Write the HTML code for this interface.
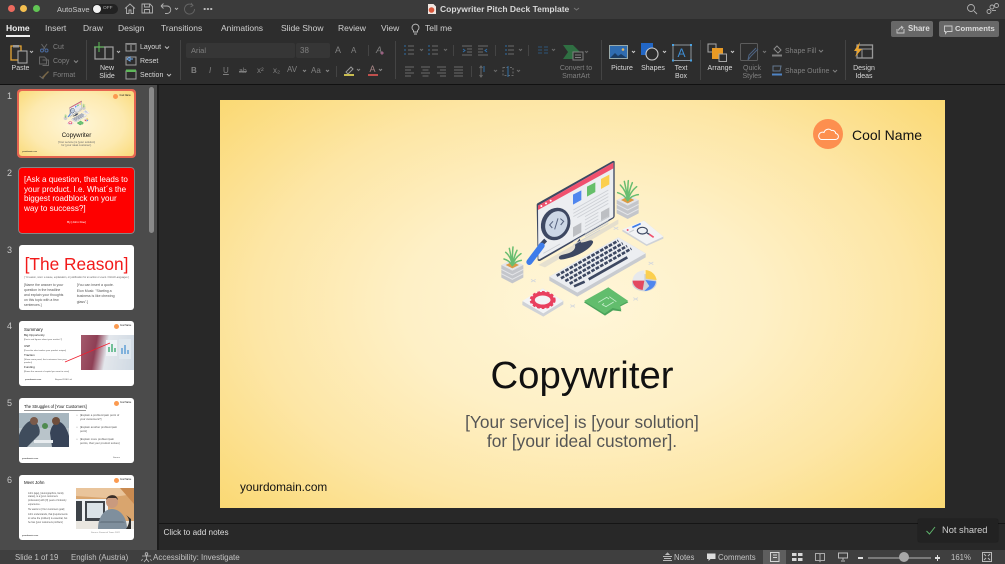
<!DOCTYPE html>
<html><head><meta charset="utf-8"><style>
html,body{margin:0;padding:0;background:#282828}
#r{position:relative;width:1005px;height:564px;overflow:hidden;background:#282828;font-family:"Liberation Sans",sans-serif;color:#d8d8d8}
.a{position:absolute}
.t{position:absolute;white-space:nowrap;line-height:1}
.c{text-align:center;transform:translateX(-50%)}
svg{position:absolute;overflow:visible}
.th{position:absolute;left:19px;width:115px;height:65px;background:#fff;border-radius:3px;overflow:hidden}
.n{position:absolute;left:7px;font-size:9px;color:#c8c8c8;line-height:1}
.tab{position:absolute;top:24px;font-size:8.5px;color:#d0d0d0;white-space:nowrap;line-height:1}
.rl{position:absolute;font-size:7px;color:#d8d8d8;white-space:nowrap;line-height:7.5px;text-align:center;transform:translateX(-50%)}
.dim{color:#808080}
.sep{position:absolute;width:1px;background:#444}
.st{position:absolute;top:554px;font-size:7.8px;color:#c4c4c4;white-space:nowrap;line-height:1}
.mini{position:absolute;color:#555;white-space:nowrap;line-height:1.25}
</style></head><body><div id="r">

<svg width="0" height="0" style="left:0;top:0"><defs><symbol id="ill" viewBox="0 0 570 525">
<!-- monitor shadow -->
<path d="M145 345 385 208v14L165 352Z" fill="#cfcfcf" opacity=".55"/>
<!-- stand -->
<path d="M255 285c3 10-5 22-28 27-14 3-22 6-20 13 2 5 10 4 22 1 35-8 72-28 80-48 2-7-6-9-12-6-6 2-14 5-24 6l-4-12Z" fill="#3d4862"/>
<!-- monitor -->
<path d="M140 165c0-3 2-5 4-6L368 33c3-1 6 0 6 3v162c0 3-2 6-5 8L152 332c-5 2-9 1-9-3Z" fill="#3d4862"/>
<path d="M144 167 370 38v160c0 3-1 4-3 5L150 327c-3 2-5 1-5-2Z" fill="#eceef1"/>
<path d="M144 167 370 38v17L144 180Z" fill="#f0516e"/>
<circle cx="154" cy="168" r="3" fill="#fff"/><circle cx="168" cy="160" r="3" fill="#fff"/><circle cx="182" cy="152" r="3" fill="#fff"/>
<path d="M249 134 274 121v29L249 164Z" fill="#4f86ee"/>
<path d="M291 110 316 97v29L291 140Z" fill="#66bf6a"/>
<path d="M333 87 358 74v29L333 117Z" fill="#fbcf4f"/>
<path d="M333 186 358 172v29L333 215Z" fill="#bdbfc3"/>
<path d="M249 232 274 218v29L249 261Z" fill="#bdbfc3"/>
<g stroke="#cdd0d5" stroke-width="2.500" fill="none"><path d="M250 180 355 120M250 190 355 130M250 200 355 140M262 203 355 150M285 200 355 160M285 210 325 187M285 220 325 197M285 230 325 207M285 240 355 200M285 250 355 210M285 260 355 220M250 275 355 215M250 285 330 240M160 310 210 282"/></g>
<!-- magnifier -->
<ellipse cx="197" cy="222" rx="43" ry="50" fill="#3d4862" transform="rotate(25 197 222)"/>
<ellipse cx="199" cy="222" rx="32" ry="40" fill="#ccd7e6" transform="rotate(25 199 222)"/>
<path d="M189 214l-10 11 8 9M211 206l10 8-9 11M204 205l-10 33" stroke="#55617d" fill="none" stroke-width="3"/>
<path d="M167 270 150 288" stroke="#3d4862" stroke-width="12"/>
<path d="M155 287 118 336" stroke="#3e7cea" stroke-width="18" stroke-linecap="round"/>
<!-- keyboard -->
<path d="M178 380 385 262 467 310v12L262 440 178 392Z" fill="#c8cbd0"/>
<path d="M178 380 385 262 467 310 262 428Z" fill="#eceef1"/>
<g stroke="#3d4862" stroke-width="8" stroke-dasharray="11 4" fill="none"><path d="M200 377 385 272"/><path d="M213 385 398 280"/><path d="M226 393 411 288"/><path d="M239 401 424 296"/></g>
<path d="M296 388 412 322" stroke="#3d4862" stroke-width="8"/>
<path d="M252 409 284 395" stroke="#3d4862" stroke-width="8"/>
<!-- right plant -->
<g transform="translate(413,150)"><path d="M-33 0v40L0 57 33 40V0Z" fill="#c4c6cb"/><path d="M-33 13 0 30 33 13M-33 27 0 44 33 27" stroke="#e4e5e8" stroke-width="3" fill="none"/><path d="M-33 0 0-17 33 0 0 17Z" fill="#e4e5e8"/><path d="M-20 0 0-10 20 0 0 10Z" fill="#dc9a45"/>
<g stroke="#68bd70" stroke-width="4.500" fill="none" stroke-linecap="round"><path d="M0 2C-3-20-12-35-22-45M0 2C-2-20-6-40-10-56M0 2C0-20 0-40 2-58M0 2C3-20 8-38 14-52M0 2C5-15 14-30 27-40M0 2C-8-12-16-18-30-22M0 2C8-8 16-14 32-16"/></g></g>
<!-- left plant -->
<g transform="translate(67,345)"><path d="M-33 0v38L0 55 33 38V0Z" fill="#c4c6cb"/><path d="M-33 13 0 30 33 13M-33 26 0 43 33 26" stroke="#e4e5e8" stroke-width="3" fill="none"/><path d="M-33 0 0-17 33 0 0 17Z" fill="#e4e5e8"/><path d="M-20 0 0-10 20 0 0 10Z" fill="#dc9a45"/>
<g stroke="#68bd70" stroke-width="4.500" fill="none" stroke-linecap="round"><path d="M0 2C-3-18-10-30-20-38M0 2C-2-18-6-36-9-50M0 2C0-18 0-36 2-54M0 2C3-18 8-32 14-44M0 2C5-15 14-26 26-34M0 2C-8-10-14-15-25-18M0 2C8-8 14-12 27-14"/></g></g>
<!-- magnify card -->
<path d="M397 240 462 212 520 260v6L470 288 397 244Z" fill="#cfd2d7"/>
<path d="M397 238 462 212 520 260 470 283Z" fill="#f2f3f5"/>
<path d="M427 232 452 221" stroke="#3e7cea" stroke-width="5"/>
<circle cx="413" cy="240" r="3" fill="#f0516e"/>
<path d="M418 247 432 240" stroke="#c9ccd1" stroke-width="3"/>
<ellipse cx="457" cy="242" rx="15" ry="10" fill="#eef1f5" stroke="#3d4862" stroke-width="3.500"/>
<path d="M471 249 480 254" stroke="#3d4862" stroke-width="4"/>
<path d="M478 253 491 262" stroke="#f0516e" stroke-width="5"/>
<!-- pie -->
<ellipse cx="463" cy="398" rx="37" ry="26" fill="#cfd2d7"/>
<path d="M463 392 428 392C428 375 442 362 463 361Z" fill="#e7e9ec"/>
<path d="M467 386V360C485 362 497 374 500 390Z" fill="#fbcf4f"/>
<path d="M463 392H428C428 405 440 418 458 420Z" fill="#e3485f"/>
<path d="M466 390 498 394C496 410 482 422 463 423L478 408Z" fill="#4f86ee"/>
<!-- gear card -->
<path d="M97 455 158 415 220 453v10L160 500 97 465Z" fill="#cfd2d7"/>
<path d="M97 453 158 415 220 453 160 490Z" fill="#f3f4f6"/>
<ellipse cx="158" cy="450" rx="29" ry="19" fill="none" stroke="#e9405f" stroke-width="11"/>
<ellipse cx="158" cy="450" rx="36" ry="24" fill="none" stroke="#e9405f" stroke-width="6" stroke-dasharray="8 6"/>
<!-- green card -->
<path d="M282 457 355 412 415 457l-25 13 4 14-25-3-24 16Z" fill="#4aa35a"/>
<path d="M282 453 355 412 415 453 390 466l4 14-26-6-24 17Z" fill="#62bd6d"/>
<path d="M325 457 350 442 357 447M342 460 337 464 348 470 371 456M358 440 379 455" stroke="#c5ecc9" fill="none" stroke-width="2.500"/>
<!-- crosses -->
<g stroke="#d4d8dd" stroke-width="2.500"><path d="M371 231l14 8M371 239l14-8M476 336l14 8M476 344l14-8M123 388l14 8M123 396l14-8M241 464l14 8M241 472l14-8M430 443l14 8M430 451l14-8"/></g>
</symbol></defs></svg>

<!-- title bar -->
<div class="a" style="left:0;top:0;width:1005px;height:19px;background:#3b3b3b"></div>
<div class="a" style="left:0;top:19px;width:1005px;height:65px;background:#2d2d2d"></div>
<div class="a" style="left:8px;top:5px;width:7px;height:7px;border-radius:50%;background:#ec6a5e"></div>
<div class="a" style="left:20px;top:5px;width:7px;height:7px;border-radius:50%;background:#f4bf4f"></div>
<div class="a" style="left:33px;top:5px;width:7px;height:7px;border-radius:50%;background:#61c554"></div>
<span class="t" style="left:57px;top:5.500px;font-size:7.500px;color:#c8c8c8">AutoSave</span>
<div class="a" style="left:92px;top:4px;width:26px;height:10px;border-radius:5px;background:#222"></div>
<div class="a" style="left:93px;top:5px;width:8px;height:8px;border-radius:50%;background:#f2f2f2"></div>
<span class="t" style="left:103px;top:7px;font-size:4.800px;color:#aaa">OFF</span>
<svg style="left:0;top:0" width="1005" height="19" fill="none" stroke="#b0b0b0" stroke-width=".9">
<path d="M125 8.500 130 4l5 4.500M126.500 7.500V13.500h2.500v-3.500h2v3.500h2.500V7.500"/>
<path d="M142 4h8L152.500 6.500V13H142ZM144.500 4v3h5V4M144.500 13v-3.500h5V13"/>
<path d="M161 6h6a3.500 3.500 0 0 1 0 7.500h-2M161 6l2.500-2.500M161 6l2.500 2.500"/>
<path d="M175 8l1.500 1.500L178 8"/>
<path d="M193 5.500a5 5 0 1 0 1.500 3.500M191 3l2 2.500-2.500 1.500" stroke="#666"/>
<path d="M967.500 3.500" /><circle cx="971" cy="8" r="3.500"/><path d="M974 11l3 3"/>
<circle cx="989" cy="11.500" r="2"/><circle cx="992" cy="7" r="2"/><circle cx="996.500" cy="5.500" r="2"/><path d="M992 10.500h4"/>
</svg>
<div class="a" style="left:203px;top:8px;width:10px;height:2px;background:radial-gradient(circle,#bbb 1px,transparent 1px) 0 0/3.300px 2px"></div>
<svg style="left:427px;top:3px" width="10" height="12"><path d="M1 1h5.500L9 3.500V11H1Z" fill="#f0e6e0"/><circle cx="4.500" cy="7" r="2.800" fill="#d9563a"/></svg>
<span class="t" style="left:440px;top:5px;font-size:8.500px;font-weight:bold;color:#d8d8d8">Copywriter Pitch Deck Template</span>
<svg style="left:573px;top:7px" width="8" height="5" fill="none" stroke="#777"><path d="M1 1l2.500 2L6 1"/></svg>

<!-- tabs -->
<span class="tab" style="left:6px;color:#eee;font-weight:bold">Home</span>
<div class="a" style="left:6px;top:35px;width:24px;height:1.500px;background:#eee"></div>
<span class="tab" style="left:45px">Insert</span>
<span class="tab" style="left:83px">Draw</span>
<span class="tab" style="left:118px">Design</span>
<span class="tab" style="left:161px">Transitions</span>
<span class="tab" style="left:221px">Animations</span>
<span class="tab" style="left:281px">Slide Show</span>
<span class="tab" style="left:338px">Review</span>
<span class="tab" style="left:381px">View</span>
<svg style="left:411px;top:23px" width="9" height="12" fill="none" stroke="#bbb" stroke-width=".9"><path d="M2.500 7.500a3.500 3.500 0 1 1 4 0V9h-4ZM3 11h3"/></svg>
<span class="tab" style="left:425px">Tell me</span>

<div class="a" style="left:891px;top:21px;width:42px;height:16px;border-radius:2px;background:#686868"></div>
<svg style="left:896px;top:25px" width="9" height="9" fill="none" stroke="#ccc" stroke-width=".9"><path d="M1 4v4h7V4M2.500 5.500C3 3.500 4.500 2.500 6 2.500M5 1l2 1.500-1.500 2"/></svg>
<span class="t" style="left:908px;top:25px;font-size:7.800px;font-weight:bold;color:#dcdcdc">Share</span>
<div class="a" style="left:939px;top:21px;width:60px;height:16px;border-radius:2px;background:#686868"></div>
<svg style="left:944px;top:25px" width="9" height="9" fill="none" stroke="#ccc" stroke-width=".9"><path d="M.5 1h7.500v5.500H3L1.500 8.500V6.500h-1Z"/></svg>
<span class="t" style="left:955px;top:25px;font-size:7.700px;font-weight:bold;color:#dcdcdc">Comments</span>

<!-- all ribbon icons: page coordinates -->
<svg style="left:0;top:0" width="1005" height="84" fill="none" stroke-width="1">
<!-- paste -->
<path d="M11 46h10v14H11Z" stroke="#e8a735" stroke-width="1.300"/><path d="M13 45h6v2.500h-6Z" fill="#999"/>
<path d="M18 51h9v12h-9Z" fill="#2d2d2d" stroke="#b0b0b0"/>
<path d="M30 51l1.500 1.500L33 51" stroke="#bbb"/>
<!-- cut copy format -->
<path d="M41.500 44l3.500 5M47 44l-3.500 5" stroke="#666"/><circle cx="42" cy="50.500" r="1.500" stroke="#4a6a9e"/><circle cx="46.500" cy="50.500" r="1.500" stroke="#4a6a9e"/>
<path d="M39.500 57h5l2 2v5h-7ZM42.500 60h6v5.500h-6" stroke="#666"/>
<path d="M41 78l4-4 3-3 1 1-3 3-3 4Z" fill="#7a6848"/><path d="M39.500 76l4 3" stroke="#666"/>
<!-- new slide -->
<path d="M95 47h18v12H95ZM105 47v12" stroke="#a0a0a0" stroke-width="1.200"/>
<path d="M99 42v10M94 47h10" stroke="#5cbf55"/>
<path d="M117 51l1.500 1.500L120 51" stroke="#bbb"/>
<!-- layout reset section -->
<path d="M126 43.500h10v7.500h-10ZM131 45v6" stroke="#a0a0a0"/><path d="M126 43.500h10v1.500h-10Z" fill="#777"/>
<path d="M126 57h10v8h-10Z" stroke="#a0a0a0"/><path d="M127 59l3-2v4ZM130 59h3" stroke="#6fa8e8"/>
<path d="M126 71h10v8h-10Z" stroke="#a0a0a0"/><path d="M126 69.500h10v2.500h-10Z" fill="#5fb75a"/>
<path d="M165 46.500l2 2 2-2M167 74l2 2 2-2" stroke="#bbb"/>
<!-- para row 1 -->
<g stroke="#6a6a6a">
<path d="M408 46h6M408 50h6M408 54h6M432 46h6M432 50h6M432 54h6"/>
<path d="M462 46h10M467 49h5M467 52h5M462 55h10M478 46h10M478 49h5M478 52h5M478 55h10"/>
<path d="M508 46h6M508 50h6M508 54h6"/>
<path d="M420 49l1.500 1.500L423 49M444 49l1.500 1.500L447 49M519 49l1.500 1.500L522 49M552 49l1.500 1.500L555 49M585 51l1.500 1.500L588 51"/>
<!-- align row -->
<path d="M405 67h9M405 70h6M405 73h9M405 76h6"/>
<path d="M421 67h9M422.500 70h6M421 73h9M422.500 76h6"/>
<path d="M437 67h9M440 70h6M437 73h9M440 76h6"/>
<path d="M454 67h9M454 70h9M454 73h9M454 76h9"/>
<path d="M481 66v11M479.500 75l1.500 2 1.500-2M479.500 68l1.500-2 1.500 2"/>
<path d="M494 70l1.500 1.500L497 70M517 70l1.500 1.500L520 70"/>
<path d="M503 67.500h10v8h-10Z" stroke-dasharray="2 1.500"/>
</g>
<path d="M404 46h2M404 50h2M404 54h2M428 46h2M428 50h2M428 54h2M505 46h2M505 50h2M505 54h2" stroke="#2f6ea8"/>
<path d="M463 49l2 1.500-2 1.500M487 49l-2 1.500 2 1.500" stroke="#2f6ea8"/>
<path d="M538 47h4M538 50h4M538 53h4M544 47h4M544 50h4M544 53h4" stroke="#2d5579"/>
<path d="M484 66v6" stroke="#2f6ea8"/><path d="M508 66v11" stroke="#2f6ea8"/>
<!-- font row small icons -->
<path d="M287 49.500l2.500 2 2.500-2M322 49.500l2.500 2 2.500-2" stroke="#888"/>
<path d="M380 53l2-2 2 2-2 2Z" fill="#9a5f80"/>
<path d="M303 70l1.500 1.500L306 70M326 70l1.500 1.500L329 70" stroke="#888"/>
<path d="M346 72l5-5 2 2-5 5Z" stroke="#999"/><rect x="344" y="74" width="10" height="2" fill="#c9bd50"/>
<path d="M357 69l1.500 1.500L360 69M379 69l1.500 1.500L382 69" stroke="#888"/>
<rect x="368" y="74" width="10" height="2" fill="#c0504d"/>
<!-- smartart -->
<path d="M563 45h10l7 7-7 7h-10l5-7Z" fill="#2f6f42"/><path d="M573 52h10v8h-10Z" fill="#2d2d2d" stroke="#808080"/><path d="M575 55h6M575 57.500h6" stroke="#808080"/>
<!-- picture -->
<rect x="609.500" y="45.500" width="18" height="13" fill="#2f6cb0" stroke="#9aa"/><path d="M610 58l5-5 3 3 3-2 6 4Z" fill="#1b3c62"/><circle cx="623" cy="49.500" r="1.300" fill="#e4b660"/>
<path d="M632 51l1.500 1.500L635 51" stroke="#ccc"/>
<!-- shapes -->
<rect x="641" y="43" width="12" height="12" fill="#2266c4"/><circle cx="652" cy="54" r="6" fill="#2d2d2d" stroke="#ccc" stroke-width="1.100"/>
<path d="M663 51l1.500 1.500L666 51" stroke="#ccc"/>
<!-- text box -->
<rect x="673" y="45" width="18" height="15.500" stroke="#8d959c"/><path d="M672 45h2M690 45h2M672 60.500h2M690 60.500h2" stroke="#4ba3e3" stroke-width="2"/>
<!-- arrange -->
<rect x="708" y="44" width="8" height="8" stroke="#a8a8a8"/><rect x="712" y="48" width="11" height="11" fill="#e89a25"/><rect x="719" y="54" width="7.500" height="7.500" fill="#2d2d2d" stroke="#a8a8a8"/>
<path d="M731 51l1.500 1.500L734 51" stroke="#ccc"/>
<!-- quick styles -->
<rect x="740.500" y="43.500" width="17" height="17" rx="1" stroke="#5c5c5c"/><path d="M758 49l-7 7-3 4 1-5 7-7" stroke="#4e6483"/><path d="M763 51l1.500 1.500L766 51" stroke="#777"/>
<!-- fill/outline -->
<path d="M777 46l4 4-3 3-4-4Z" stroke="#8c8c8c"/><path d="M772 55.500h10" stroke="#808080" stroke-width="2"/>
<path d="M773 66h8l-1 5h-7Z" stroke="#64788f"/><path d="M772 74.500h10" stroke="#4f84c4" stroke-width="2"/>
<path d="M819 50l2 2 2-2M833 70l2 2 2-2" stroke="#808080"/>
<!-- design -->
<rect x="857" y="45" width="15.500" height="13" stroke="#999" stroke-width="1.300"/><path d="M857 49h15M862 49v9" stroke="#999"/><path d="M860 42 854 51h3.500L855 57l7-8H858.500Z" fill="#eba52f"/>
</svg>
<span class="t" style="left:677.500px;top:47px;font-size:12px;color:#3f8fd6">A</span>

<span class="rl" style="left:20.500px;top:65px">Paste</span>
<span class="t dim" style="left:53px;top:43.500px;font-size:7px">Cut</span>
<span class="t dim" style="left:53px;top:57.500px;font-size:7px">Copy</span>
<svg style="left:73px;top:60px" width="6" height="4" fill="none" stroke="#888"><path d="M1 .5l2 2 2-2"/></svg>
<span class="t dim" style="left:53px;top:71.500px;font-size:7px">Format</span>
<div class="sep" style="left:85.500px;top:40px;height:40px"></div>
<span class="rl" style="left:107px;top:65px">New<br>Slide</span>
<span class="t" style="left:140px;top:44px;font-size:7px">Layout</span>
<span class="t" style="left:140px;top:58px;font-size:7px">Reset</span>
<span class="t" style="left:140px;top:72px;font-size:7px">Section</span>
<div class="sep" style="left:180px;top:40px;height:40px"></div>

<!-- font boxes -->
<div class="a" style="left:186px;top:43px;width:109px;height:15px;border-radius:2px;background:#363636"></div>
<span class="t dim" style="left:191px;top:47px;font-size:7.500px">Arial</span>
<div class="a" style="left:296px;top:43px;width:34px;height:15px;border-radius:2px;background:#363636"></div>
<span class="t dim" style="left:300px;top:47px;font-size:8px">38</span>
<span class="t dim" style="left:335px;top:46px;font-size:9px">A</span><span class="t dim" style="left:351px;top:47px;font-size:8px">A</span>
<div class="sep" style="left:368px;top:45px;height:11px"></div>
<span class="t dim" style="left:376px;top:46px;font-size:9px;font-style:italic">A</span>
<span class="t dim" style="left:191px;top:67px;font-size:8px;font-weight:bold">B</span>
<span class="t dim" style="left:209px;top:67px;font-size:8px;font-style:italic">I</span>
<span class="t dim" style="left:223px;top:67px;font-size:8px;text-decoration:underline">U</span>
<span class="t dim" style="left:239px;top:68px;font-size:7px;text-decoration:line-through">ab</span>
<span class="t dim" style="left:257px;top:67px;font-size:8px">x²</span>
<span class="t dim" style="left:273px;top:67px;font-size:8px">x₂</span>
<span class="t dim" style="left:287px;top:66px;font-size:8px">AV</span>
<span class="t dim" style="left:311px;top:67px;font-size:8px">Aa</span>
<span class="t" style="left:369.500px;top:65px;font-size:9px;color:#a88">A</span>
<div class="sep" style="left:336px;top:66px;height:11px"></div>
<div class="sep" style="left:395px;top:41px;height:38px"></div>
<div class="sep" style="left:453px;top:45px;height:11px"></div>
<div class="sep" style="left:495px;top:45px;height:11px"></div>
<div class="sep" style="left:528px;top:45px;height:11px"></div>
<div class="sep" style="left:471px;top:66px;height:11px"></div>
<span class="rl dim" style="left:576px;top:65px">Convert to<br>SmartArt</span>
<div class="sep" style="left:601px;top:40px;height:40px"></div>
<span class="rl" style="left:622px;top:65px">Picture</span>
<span class="rl" style="left:653px;top:65px">Shapes</span>
<span class="rl" style="left:681px;top:65px">Text<br>Box</span>
<div class="sep" style="left:700px;top:40px;height:40px"></div>
<span class="rl" style="left:720px;top:65px">Arrange</span>
<span class="rl dim" style="left:752px;top:65px">Quick<br>Styles</span>
<span class="t dim" style="left:785px;top:48px;font-size:7px">Shape Fill</span>
<span class="t dim" style="left:785px;top:68px;font-size:7px">Shape Outline</span>
<div class="sep" style="left:845px;top:40px;height:40px"></div>
<span class="rl" style="left:864px;top:65px">Design<br>Ideas</span>

<div class="a" style="left:0;top:84px;width:1005px;height:1px;background:#111"></div>

<!-- sidebar -->
<div class="a" style="left:0;top:85px;width:157px;height:465px;background:#4b4b4b"></div>
<div class="a" style="left:157px;top:85px;width:2px;height:465px;background:#1c1c1c"></div>
<div class="a" style="left:149px;top:87px;width:5px;height:146px;border-radius:3px;background:#8a8a8a"></div>

<span class="n" style="top:92px">1</span>
<span class="n" style="top:169px">2</span>
<span class="n" style="top:246px">3</span>
<span class="n" style="top:322px">4</span>
<span class="n" style="top:399px">5</span>
<span class="n" style="top:476px">6</span>

<!-- thumb 1 -->
<div class="a" style="left:17px;top:89px;width:119px;height:69px;border-radius:4px;background:#e56450"></div>
<div class="th" style="top:91px;background:radial-gradient(ellipse 75% 85% at 50% 50%,#fff6d9 0%,#fdeab0 55%,#f9d566 100%)">
<svg style="left:42.800px;top:7.900px" width="30" height="27.800"><use href="#ill" width="30" height="27.800"/></svg>
<span class="t c" style="left:57.500px;top:41.500px;font-size:6.200px;color:#111">Copywriter</span>
<span class="t c" style="left:57.500px;top:49.500px;font-size:2.750px;color:#666;text-align:center;line-height:1.150">[Your service] is [your solution]<br>for [your ideal customer].</span>
<span class="t" style="left:3.200px;top:60px;font-size:2px;color:#111">yourdomain.com</span>
<div class="a" style="left:94px;top:3px;width:5px;height:5px;border-radius:50%;background:#fb9a50"></div>
<span class="t" style="left:100.500px;top:4.300px;font-size:2.250px;color:#111">Cool Name</span>
</div>

<!-- thumb 2 -->
<div class="th" style="top:168px;background:#fe0000;box-shadow:0 0 0 .7px #999">
<div class="t" style="left:5px;top:7px;font-size:8.100px;line-height:9.700px;color:#fff;">[Ask a question, that leads to<br>your product. I.e. What´s the<br>biggest roadblock on your<br>way to success?]</div>
<span class="t c" style="left:57.500px;top:52.500px;font-size:3px;color:#fff">By [John Doe]</span>
</div>

<!-- thumb 3 -->
<div class="th" style="top:245px">
<span class="t c" style="left:57.500px;top:11.400px;font-size:17.300px;color:#f21a1a">[The Reason]</span>
<span class="t c" style="left:57.500px;top:31.500px;font-size:2.450px;color:#666">[ "A reason, noun: a cause, explanation, or justification for an action or event. Oxford Languages ]</span>
<div class="mini" style="left:5px;top:37.500px;font-size:3.450px;line-height:5px">[Name the answer to your<br>question in the headline<br>and explain your thoughts<br>on this topic with a few<br>sentences.]</div>
<div class="mini" style="left:57.700px;top:37.800px;font-size:3.550px;line-height:5.700px">[You can insert a quote.<br>Elon Musk: "Starting a<br>business is like chewing<br>glass".]</div>
</div>

<!-- thumb 4 -->
<div class="th" style="top:321px">
<span class="t" style="left:5px;top:6.500px;font-size:4.400px;color:#111">Summary</span>
<div class="a" style="left:95px;top:2.500px;width:5px;height:5px;border-radius:50%;background:#fb9a50"></div>
<span class="t" style="left:101px;top:3.800px;font-size:2.250px;color:#111">Cool Name</span>
<div class="mini" style="left:5px;top:13px;font-size:3px;color:#222">Big Opportunity</div>
<div class="mini" style="left:5px;top:18.300px;font-size:2.200px">[Facts and figures about your market ?]</div>
<div class="mini" style="left:5px;top:24px;font-size:3px;color:#222">USP</div>
<div class="mini" style="left:5px;top:29.300px;font-size:2.200px">[Describe what makes your product unique]</div>
<div class="mini" style="left:5px;top:33px;font-size:3px;color:#222">Traction</div>
<div class="mini" style="left:5px;top:38.300px;font-size:2.200px;line-height:3px">[Show some proof, that customers love your<br>product]</div>
<div class="mini" style="left:5px;top:45px;font-size:3px;color:#222">Funding</div>
<div class="mini" style="left:5px;top:50.300px;font-size:2.200px">[Name the amount of capital you want to raise]</div>
<div class="mini" style="left:6px;top:58.300px;font-size:2.200px;color:#111">yourdomain.com</div>
<div class="mini" style="left:36px;top:58.300px;font-size:2.200px">Beyond 2030 Ltd.</div>
<div class="a" style="left:62px;top:14px;width:53px;height:35px;background:linear-gradient(100deg,#a45a6c 0%,#8e3f55 28%,#e3e7ec 48%,#cfd9e3 100%)"></div>
<svg style="left:85px;top:16px" width="30" height="26"><rect x="2" y="3" width="11" height="16" fill="#eef2f6"/><rect x="15" y="2" width="12" height="20" fill="#dfe7ee"/><path d="M5 15v-5M8 15V7M11 15v-4" stroke="#49b07a" stroke-width="1.500"/><path d="M18 17v-6M21 17V8M24 17v-4" stroke="#5f9fd6" stroke-width="1.500"/></svg>
<svg style="left:0;top:0" width="115" height="65"><path d="M46 41 91 22" stroke="#f01f2f" stroke-width=".8"/></svg>
</div>

<!-- thumb 5 -->
<div class="th" style="top:398px">
<span class="t" style="left:5px;top:7px;font-size:4.100px;color:#111">The Struggles of [Your Customers]</span>
<div class="a" style="left:5px;top:12.200px;width:62px;height:.5px;background:#999"></div>
<div class="a" style="left:95px;top:2.500px;width:5px;height:5px;border-radius:50%;background:#fb9a50"></div>
<span class="t" style="left:101px;top:3.800px;font-size:2.250px;color:#111">Cool Name</span>
<svg style="left:0;top:15px" width="50" height="34"><rect width="50" height="34" fill="#b9c4ca"/><rect x="0" y="0" width="50" height="15" fill="#a7b6bf"/><path d="M0 22C5 10 12 6 15 8c5 3 7 10 5 14L8 34H0Z" fill="#3f4c5c"/><circle cx="15" cy="8" r="4" fill="#7a5a4a"/><path d="M31 20c1-8 6-12 10-11 5 2 8 10 9 14v11H33Z" fill="#384458"/><circle cx="37" cy="8" r="4" fill="#6f4e3c"/><circle cx="26" cy="13" r="3" fill="#4f8a4f"/><rect x="15" y="27" width="19" height="3" fill="#e8ecef"/></svg>
<div class="mini" style="left:61px;top:15.800px;font-size:2.800px;line-height:3.900px"><span style="position:absolute;left:-3.500px">•</span>[Explain a problem/pain point of<br>your customers?]</div>
<div class="mini" style="left:61px;top:28px;font-size:2.800px;line-height:3.900px"><span style="position:absolute;left:-3.500px">•</span>[Explain another problem/pain<br>point]</div>
<div class="mini" style="left:61px;top:40px;font-size:2.800px;line-height:3.900px"><span style="position:absolute;left:-3.500px">•</span>[Explain more problem/pain<br>points, that your product solves]</div>
<div class="mini" style="left:3px;top:59.500px;font-size:2.200px;color:#111">yourdomain.com</div>
<div class="mini" style="left:94px;top:59px;font-size:2.200px">Source</div>
</div>

<!-- thumb 6 -->
<div class="th" style="top:475px">
<span class="t" style="left:5px;top:6px;font-size:4.400px;color:#111">Meet John</span>
<div class="a" style="left:95px;top:2.500px;width:5px;height:5px;border-radius:50%;background:#fb9a50"></div>
<span class="t" style="left:101px;top:3.800px;font-size:2.250px;color:#111">Cool Name</span>
<div class="mini" style="left:9px;top:16.500px;font-size:2.400px;line-height:3.700px">John [age], [demographics, family<br>status], is a [your customers<br>profession] with [X] years of industry<br>experience.</div>
<div class="mini" style="left:9px;top:33px;font-size:2.400px;line-height:3.400px">He wants to [Your customers goal]</div>
<div class="mini" style="left:9px;top:38.300px;font-size:2.400px;line-height:3.700px">John understands, that [requirements<br>to solve the problem] is essential, but<br>he has [your customers problem]</div>
<div class="mini" style="left:3px;top:59.500px;font-size:2.200px;color:#111">yourdomain.com</div>
<div class="mini" style="left:72px;top:57px;font-size:2.200px;color:#888">Source: Financial Times 2022</div>
<svg style="left:57px;top:13px" width="58" height="41"><rect width="58" height="41" fill="#d9a56e"/><path d="M0 0h58v6L30 10 0 8Z" fill="#e9c49b"/><path d="M44 0h14v16Z" fill="#c98a50"/><rect x="0" y="11" width="32" height="22" fill="#eef1f3"/><rect x="9" y="13" width="20" height="20" fill="#40454b"/><rect x="11" y="15" width="16" height="15" fill="#dbe3e8"/><rect x="0" y="13" width="6" height="20" fill="#3d4248"/><rect x="0" y="33" width="58" height="8" fill="#e9e6e0"/><path d="M22 41c0-13 7-20 14-20s15 7 15 20Z" fill="#7f8f9d"/><circle cx="36" cy="14" r="6" fill="#c99a7e"/><path d="M30 12c1-6 11-7 12 0l-2-2h-8Z" fill="#3a2e28"/><path d="M25 33h22l2 2H23Z" fill="#6d7c89"/><path d="M50 41c4-6 4-10 0-14l5 4v10Z" fill="#2d2d2d"/></svg>
</div>

<!-- main slide -->
<div class="a" style="left:220px;top:100px;width:725px;height:408px;background:radial-gradient(ellipse 70% 78% at 50% 50%,#fff6d9 0%,#fef0c6 35%,#fde6a5 65%,#fad76d 100%);overflow:hidden">
<div class="a" style="left:593px;top:19px;width:30px;height:30px;border-radius:50%;background:#fd8f4f"></div>
<svg style="left:597px;top:27px" width="22" height="13" fill="none" stroke="#fff" stroke-width="1"><path d="M4 12.500h14a3 3 0 0 0 .8-6A3.500 3.500 0 0 0 14.500 3.500 4.500 4.500 0 0 0 7 5.500 3.500 3.500 0 0 0 4 12.500Z"/></svg>
<span class="t" style="left:632px;top:28px;font-size:14px;color:#111">Cool Name</span>

<svg style="left:270px;top:50px" width="190" height="175"><use href="#ill" width="190" height="175"/></svg>

<span class="t c" style="left:362px;top:257px;font-size:38.300px;color:#111">Copywriter</span>
<div class="t c" style="left:362px;top:312.500px;font-size:17.300px;line-height:19.500px;color:#555;text-align:center">[Your service] is [your solution]<br>for [your ideal customer].</div>
<span class="t" style="left:20px;top:382px;font-size:11.800px;color:#111">yourdomain.com</span>
</div>

<!-- notes -->
<div class="a" style="left:159px;top:523px;width:846px;height:1px;background:#151515"></div>
<span class="t" style="left:163.500px;top:529px;font-size:8.200px;color:#dedede">Click to add notes</span>
<div class="a" style="left:918px;top:519px;width:80px;height:23px;border-radius:2px;background:#222;box-shadow:0 0 1px #111"></div>
<svg style="left:925px;top:526px" width="12" height="10" fill="none" stroke="#5fb56c" stroke-width="1"><path d="M1.500 5l3 3 5.500-7"/></svg>
<span class="t" style="left:942px;top:526px;font-size:9.300px;color:#cfcfcf">Not shared</span>

<!-- status -->
<div class="a" style="left:0;top:550px;width:1005px;height:14px;background:#3f3f3f"></div>
<span class="st" style="left:15px">Slide 1 of 19</span>
<span class="st" style="left:71px">English (Austria)</span>
<svg style="left:141px;top:552px" width="11" height="11" fill="none" stroke="#bbb" stroke-width=".8"><circle cx="5.500" cy="2" r="1.300"/><path d="M1 4h9M5.500 4v3M3 10l2.500-3 2.500 3M1.500 7l-1 2M9.500 7l1 2"/></svg>
<span class="st" style="left:153px;font-size:8px">Accessibility: Investigate</span>
<svg style="left:663px;top:553px" width="9" height="8" fill="none" stroke="#bbb" stroke-width=".9"><path d="M4.500 0l1.500 1.500H3ZM0 3.500h9M1 5.500h7M0 7.500h9"/></svg>
<span class="st" style="left:674px">Notes</span>
<svg style="left:707px;top:553px" width="9" height="8"><path d="M0 .5h8.500v5.500H3.500L1.500 8V6H0Z" fill="#ddd"/></svg>
<span class="st" style="left:718px">Comments</span>
<div class="a" style="left:763px;top:550px;width:23px;height:14px;background:#5e5e5e"></div>
<svg style="left:770px;top:552px" width="10" height="11" fill="none" stroke="#d6d6d6"><rect x=".5" y=".5" width="8.500" height="9"/><path d="M3 3h4M3 5.500h4"/></svg>
<svg style="left:792px;top:553px" width="11" height="9" fill="#d8d8d8"><rect width="4.500" height="3"/><rect x="6" width="4.500" height="3"/><rect y="5" width="4.500" height="3"/><rect x="6" y="5" width="4.500" height="3"/></svg>
<svg style="left:815px;top:552px" width="10" height="10" fill="none" stroke="#aaa"><path d="M.5 1.500h4l.5 1 .5-1h4v7h-4l-.5 1-.5-1h-4ZM5 2.500v6"/></svg>
<svg style="left:838px;top:552px" width="11" height="10" fill="none" stroke="#bbb"><path d="M.5 1h9v5h-9ZM5 6v2M3 9h4"/></svg>
<div class="a" style="left:858px;top:557px;width:5px;height:1.500px;background:#ddd"></div>
<div class="a" style="left:868px;top:557px;width:63px;height:1.500px;background:#7a7a7a"></div>
<div class="a" style="left:899px;top:552px;width:10px;height:10px;border-radius:50%;background:#a9a9a9"></div>
<div class="a" style="left:935px;top:557px;width:5px;height:1.500px;background:#ddd"></div>
<div class="a" style="left:936.800px;top:555px;width:1.500px;height:5.500px;background:#ddd"></div>
<span class="st" style="left:951px">161%</span>
<svg style="left:982px;top:552px" width="10" height="10" fill="none" stroke="#bbb"><rect x=".5" y=".5" width="9" height="9"/><path d="M2 2l2 2M8 2 6 4M2 8l2-2M8 8 6 6"/></svg>

</div></body></html>
